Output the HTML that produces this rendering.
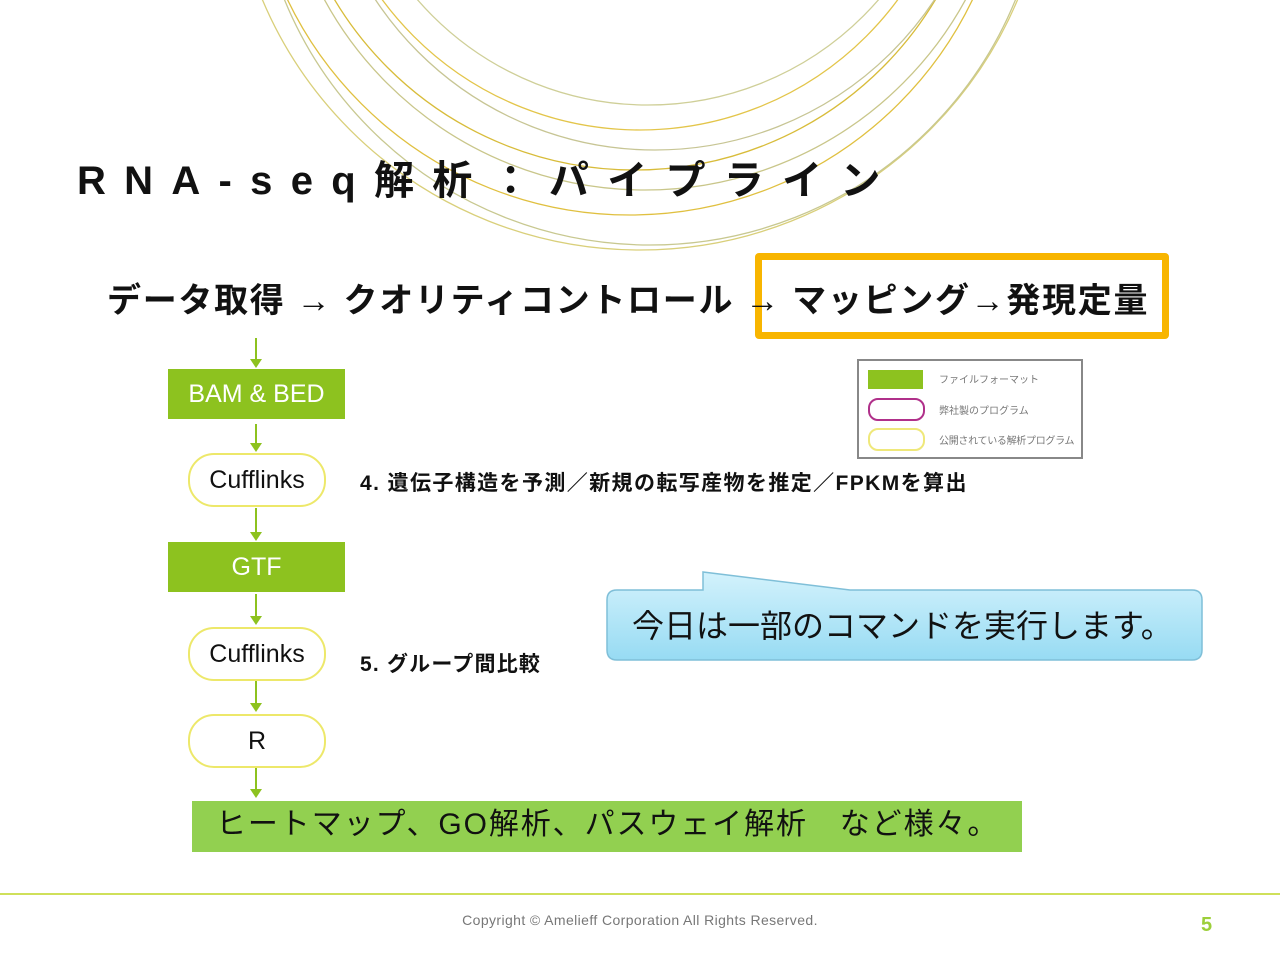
<!DOCTYPE html>
<html><head><meta charset="utf-8"><style>
body{margin:0;width:1280px;height:960px;background:#fff;position:relative;overflow:hidden;font-family:"Liberation Sans","Noto Sans CJK JP",sans-serif}
.a{position:absolute}
.box{position:absolute;background:#8dc21f;color:#fff;font-size:25px;text-align:center;display:flex;align-items:center;justify-content:center}
.pill{position:absolute;border:2px solid #ede86a;border-radius:26px;background:#fff;font-size:25px;display:flex;align-items:center;justify-content:center;color:#111;box-sizing:border-box}
.ln{position:absolute;left:255px;width:2px;background:#8dc21f}
.ah{position:absolute;left:250px;width:0;height:0;border-left:6px solid transparent;border-right:6px solid transparent;border-top:9px solid #8dc21f}
</style></head><body>
<svg class="a" style="left:0;top:0" width="1280" height="260">
<g fill="none" stroke-width="1.3">
<circle cx="640" cy="-160" r="410" stroke="#d9cf7a"/>
<circle cx="650" cy="-150" r="395" stroke="#c8c890"/>
<circle cx="630" cy="-165" r="380" stroke="#e0c040"/>
<circle cx="645" cy="-175" r="365" stroke="#c9c68a"/>
<circle cx="635" cy="-180" r="350" stroke="#d8bc3a"/>
<circle cx="655" cy="-185" r="335" stroke="#c7c594"/>
<circle cx="640" cy="-190" r="320" stroke="#e3c54a"/>
<circle cx="648" cy="-200" r="305" stroke="#cfcf98"/>
</g></svg>
<div class="a" style="left:77px;top:148px;font-size:40px;font-weight:bold;letter-spacing:18.3px;white-space:nowrap;color:#111">RNA-seq解析：パイプライン</div>
<div class="a" style="left:755px;top:253px;width:400px;height:72px;border:7px solid #f8b500;border-radius:4px"></div>
<div class="a" style="left:107px;top:273px;font-size:34px;font-weight:bold;white-space:nowrap;color:#111;letter-spacing:1.7px">データ取得 → クオリティコントロール → マッピング→発現定量</div>

<div class="ln" style="top:338px;height:22px"></div><div class="ah" style="top:359px"></div>
<div class="box" style="left:168px;top:369px;width:177px;height:50px">BAM &amp; BED</div>
<div class="ln" style="top:424px;height:20px"></div><div class="ah" style="top:443px"></div>
<div class="pill" style="left:188px;top:453px;width:138px;height:54px">Cufflinks</div>
<div class="ln" style="top:508px;height:24px"></div><div class="ah" style="top:532px"></div>
<div class="box" style="left:168px;top:542px;width:177px;height:50px">GTF</div>
<div class="ln" style="top:594px;height:22px"></div><div class="ah" style="top:616px"></div>
<div class="pill" style="left:188px;top:627px;width:138px;height:54px">Cufflinks</div>
<div class="ln" style="top:681px;height:23px"></div><div class="ah" style="top:703px"></div>
<div class="pill" style="left:188px;top:714px;width:138px;height:54px">R</div>
<div class="ln" style="top:768px;height:22px"></div><div class="ah" style="top:789px"></div>
<div class="a" style="left:192px;top:801px;width:830px;height:51px;background:#92d050;font-size:30px;color:#111;line-height:48px;padding-left:24px;box-sizing:border-box;white-space:nowrap;letter-spacing:1.9px">ヒートマップ、GO解析、パスウェイ解析　など様々。</div>

<div class="a" style="left:360px;top:467px;font-size:21px;font-weight:bold;color:#111;white-space:nowrap;letter-spacing:1.4px">4. 遺伝子構造を予測／新規の転写産物を推定／FPKMを算出</div>
<div class="a" style="left:360px;top:648px;font-size:21px;font-weight:bold;color:#111;white-space:nowrap;letter-spacing:1.2px">5. グループ間比較</div>

<div class="a" style="left:857px;top:359px;width:226px;height:100px;border:2px solid #888;box-sizing:border-box"></div>
<div class="a" style="left:868px;top:370px;width:55px;height:19px;background:#8dc21f"></div>
<div class="a" style="left:868px;top:398px;width:53px;height:19px;border:2px solid #b0308a;border-radius:10px"></div>
<div class="a" style="left:868px;top:428px;width:53px;height:19px;border:2px solid #efe87a;border-radius:10px"></div>
<div class="a" style="left:939px;top:371px;font-size:10px;color:#777">ファイルフォーマット</div>
<div class="a" style="left:939px;top:402px;font-size:10px;color:#777">弊社製のプログラム</div>
<div class="a" style="left:939px;top:432px;font-size:10px;color:#777;letter-spacing:-0.3px">公開されている解析プログラム</div>

<svg class="a" style="left:600px;top:565px" width="620" height="110">
<defs><linearGradient id="g" x1="0" y1="0" x2="0" y2="1"><stop offset="0" stop-color="#d3f2fc"/><stop offset="1" stop-color="#97dbf3"/></linearGradient></defs>
<path d="M17 25 H103 L103 7 L250 25 H592 Q602 25 602 35 V85 Q602 95 592 95 H17 Q7 95 7 85 V35 Q7 25 17 25 Z" fill="url(#g)" stroke="#7fbfd8" stroke-width="1.5"/>
</svg>
<div class="a" style="left:632px;top:601px;font-size:32px;color:#111;white-space:nowrap">今日は一部のコマンドを実行します。</div>

<div class="a" style="left:0;top:893px;width:1280px;height:2px;background:#cfe05a"></div>
<div class="a" style="left:0;top:912px;width:1280px;text-align:center;font-size:14px;color:#777;letter-spacing:0.4px">Copyright © Amelieff Corporation All Rights Reserved.</div>
<div class="a" style="left:1201px;top:914px;font-size:20px;font-weight:bold;color:#9ccf3a">5</div>
</body></html>
